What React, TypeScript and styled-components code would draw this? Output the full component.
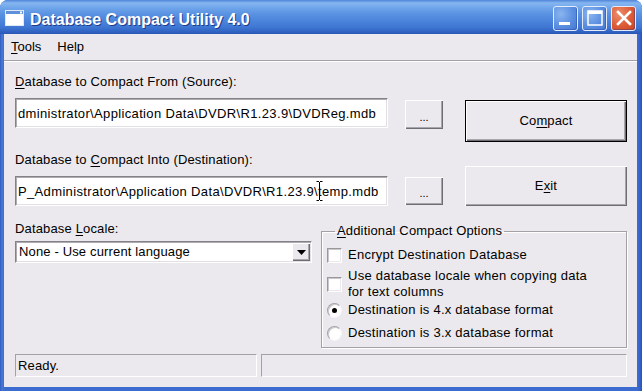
import React from 'react';
import { styled, createGlobalStyle } from 'styled-components';

const GlobalStyle = createGlobalStyle`
    html, body {
        margin: 0;
        padding: 0;
        background: #ffffff;
    }
    * {
        box-sizing: border-box;
    }
`

const UI_FONT = `"Liberation Sans", Arial, sans-serif`;

const App: React.FC = () => {
    return (
        <>
            <GlobalStyle />
            <Window>
                <TitleBar>
                    <TitleIcon width="19" height="16" viewBox="0 0 19 16">
                        <rect x="0.5" y="0.5" width="18" height="15" fill="#ffffff" stroke="#dfe8f7" />
                        <rect x="1" y="1" width="17" height="3" fill="#5f8fd8" />
                        <rect x="15" y="1.5" width="2" height="2" fill="#ffffff" />
                    </TitleIcon>
                    <TitleText>Database Compact Utility 4.0</TitleText>
                    <CaptionButtons>
                        <CaptionButton $variant="normal" aria-label="Minimize">
                            <svg width="22" height="22" viewBox="0 0 22 22">
                                <rect x="4" y="15" width="11" height="3" fill="#ffffff" />
                            </svg>
                        </CaptionButton>
                        <CaptionButton $variant="normal" aria-label="Maximize">
                            <svg width="22" height="22" viewBox="0 0 22 22">
                                <rect x="4" y="4" width="14" height="14" fill="none" stroke="#ffffff" strokeWidth="1.5" />
                                <rect x="4" y="4" width="14" height="3" fill="#ffffff" />
                            </svg>
                        </CaptionButton>
                        <CaptionButton $variant="close" aria-label="Close">
                            <svg width="22" height="22" viewBox="0 0 22 22">
                                <path d="M5 5 L17 17 M17 5 L5 17" stroke="#ffffff" strokeWidth="2.6" strokeLinecap="square" />
                            </svg>
                        </CaptionButton>
                    </CaptionButtons>
                </TitleBar>
                <Client>
                    <MenuBar>
                        <MenuItem><U>T</U>ools</MenuItem>
                        <MenuItem>Help</MenuItem>
                    </MenuBar>
                    <MenuSeparator />
                    <Body>
                        <TopSection>
                            <PathsPanel>
                                <FieldLabel><U>D</U>atabase to Compact From (Source):</FieldLabel>
                                <FieldRow>
                                    <PathInput>dministrator\Application Data\DVDR\R1.23.9\DVDReg.mdb</PathInput>
                                    <BrowseButton $top={2} $height={29}>...</BrowseButton>
                                </FieldRow>
                                <FieldLabel $gap={23}>Database to <U>C</U>ompact Into (Destination):</FieldLabel>
                                <FieldRow>
                                    <PathInput>
                                        P_Administrator\Application Data\DVDR\R1.23.9\temp.mdb
                                        <IBeam width="7" height="20" viewBox="0 0 7 20">
                                            <path d="M0.5 0.5h2.5M4 0.5h2.5M3.5 1v18M0.5 19.5h2.5M4 19.5h2.5" stroke="#000" strokeWidth="1" fill="none" />
                                        </IBeam>
                                    </PathInput>
                                    <BrowseButton $top={1} $height={28}>...</BrowseButton>
                                </FieldRow>
                            </PathsPanel>
                            <ActionsPanel>
                                <ActionButton $default $height={42}>Co<U>m</U>pact</ActionButton>
                                <ActionButton $height={40} $gap={24}>E<U>x</U>it</ActionButton>
                            </ActionsPanel>
                        </TopSection>
                        <BottomSection>
                            <LocalePanel>
                                <FieldLabel $gap={0}>Database <U>L</U>ocale:</FieldLabel>
                                <Combo>
                                    <ComboText>None - Use current language</ComboText>
                                    <ComboArrow>
                                        <svg width="9" height="5" viewBox="0 0 9 5">
                                            <path d="M0 0h9L4.5 5z" fill="#000" />
                                        </svg>
                                    </ComboArrow>
                                </Combo>
                            </LocalePanel>
                            <OptionsGroup>
                                <GroupLegend><U>A</U>dditional Compact Options</GroupLegend>
                                <Option $gap={0}>
                                    <CheckBox />
                                    <OptionText>Encrypt Destination Database</OptionText>
                                </Option>
                                <Option $gap={5}>
                                    <CheckBox />
                                    <OptionText>Use database locale when copying data<br />for text columns</OptionText>
                                </Option>
                                <Option $gap={2}>
                                    <Radio $checked />
                                    <OptionText>Destination is 4.x database format</OptionText>
                                </Option>
                                <Option $gap={7}>
                                    <Radio />
                                    <OptionText>Destination is 3.x database format</OptionText>
                                </Option>
                            </OptionsGroup>
                        </BottomSection>
                        <StatusBar>
                            <StatusPanel $width={242}>Ready.</StatusPanel>
                            <StatusPanel />
                        </StatusBar>
                    </Body>
                </Client>
            </Window>
        </>
    );
};

export default App;

const Window = styled.div`
    width: 642px;
    height: 391px;
    display: flex;
    flex-direction: column;
    background: linear-gradient(90deg, #2f5cc0 0px, #4a78d6 2px, #3d6cd0 4px, #3d6cd0 calc(100% - 4px), #2a55b8 100%);
    border-radius: 8px 8px 0 0;
    overflow: hidden;
    font-family: ${UI_FONT};
    font-size: 13px;
    letter-spacing: 0.15px;
    color: #000;
`
const TitleBar = styled.div`
    height: 34px;
    flex: none;
    display: flex;
    align-items: center;
    padding: 0 6px 0 5px;
    background: linear-gradient(180deg,
        #4f84da 0px,
        #86b6f0 3px,
        #6ea4ea 8px,
        #5a92e2 14px,
        #4d86dc 20px,
        #3f77d3 27px,
        #3366c6 31px,
        #2a56b5 34px);
`
const TitleIcon = styled.svg`
    flex: none;
    margin-top: 2px;
`
const TitleText = styled.span`
    flex: 1;
    margin-left: 6px;
    padding-top: 5px;
    font-family: "Liberation Sans", Arial, sans-serif;
    font-weight: 700;
    font-size: 16px;
    letter-spacing: 0;
    color: #ffffff;
    text-shadow: 1px 1px 0 #1c3c8e;
    white-space: nowrap;
`
const CaptionButtons = styled.div`
    display: flex;
    gap: 4px;
    margin-top: 2px;
`
const CaptionButton = styled.button<{ $variant: 'normal' | 'close' }>`
    width: 25px;
    height: 25px;
    padding: 0;
    border: 1px solid #e4ecfa;
    border-radius: 3px;
    display: flex;
    align-items: center;
    justify-content: center;
    background: ${({ $variant }) => $variant === 'close'
        ? 'radial-gradient(circle at 30% 30%, #ec8e6e 0%, #dc5b36 55%, #c8441e 100%)'
        : 'radial-gradient(circle at 30% 30%, #8ab5ef 0%, #5a8ee0 55%, #4677d2 100%)'};
    box-shadow: inset -1px -1px 0 rgba(20, 50, 140, 0.35);
`
const Client = styled.div`
    flex: 1;
    display: flex;
    flex-direction: column;
    margin: 0 5px 4px 4px;
    background: #ebe9ed;
`
const MenuBar = styled.div`
    height: 26px;
    display: flex;
    align-items: center;
    gap: 16px;
    padding-left: 7px;
    letter-spacing: 0;
`
const MenuItem = styled.span`
    line-height: 16px;
`
const MenuSeparator = styled.div`
    height: 2px;
    border-top: 1px solid #a3a1a6;
    border-bottom: 1px solid #ffffff;
`
const U = styled.span`
    text-decoration: underline;
    text-underline-offset: 2px;
`
const Body = styled.div`
    flex: 1;
    display: flex;
    flex-direction: column;
    padding: 12px 10px 10px 11px;
`
const TopSection = styled.div`
    display: flex;
    align-items: flex-start;
`
const PathsPanel = styled.div`
    width: 428px;
    display: flex;
    flex-direction: column;
`
const FieldLabel = styled.div<{ $gap?: number }>`
    line-height: 16px;
    margin-top: ${({ $gap }) => $gap ?? 0}px;
    white-space: nowrap;
`
const FieldRow = styled.div`
    display: flex;
    align-items: flex-start;
    gap: 17px;
    margin-top: 8px;
`
const PathInput = styled.div`
    position: relative;
    width: 373px;
    height: 30px;
    display: flex;
    align-items: center;
    padding-left: 2px;
    background: #ffffff;
    border: 1px solid;
    border-color: #848287 #ffffff #ffffff #848287;
    box-shadow: inset 1px 1px 0 #aeacb1, inset -1px -1px 0 #e2e0e5;
    letter-spacing: 0.35px;
    white-space: nowrap;
    overflow: hidden;
`
const IBeam = styled.svg`
    position: absolute;
    left: 300px;
    top: 4px;
`
const raised = `
    background: #ebe9ed;
    box-shadow: inset 1px 1px 0 #ffffff, inset -1px -1px 0 #6f6d74, inset -2px -2px 0 #a8a6ab;
`
const BrowseButton = styled.button<{ $top: number; $height: number }>`
    width: 38px;
    height: ${({ $height }) => $height}px;
    margin-top: ${({ $top }) => $top}px;
    padding: 4px 0 0;
    border: none;
    ${raised}
    font-family: ${UI_FONT};
    font-size: 11px;
    color: #000;
`
const ActionsPanel = styled.div`
    width: 162px;
    margin-left: 22px;
    padding-top: 26px;
    display: flex;
    flex-direction: column;
`
const ActionButton = styled.button<{ $default?: boolean; $height: number; $gap?: number }>`
    width: 162px;
    height: ${({ $height }) => $height}px;
    margin-top: ${({ $gap }) => $gap ?? 0}px;
    padding: 0 0 2px;
    border: ${({ $default }) => ($default ? '1px solid #000000' : 'none')};
    ${raised}
    font-family: ${UI_FONT};
    font-size: 13px;
    letter-spacing: 0.15px;
    color: #000;
`
const BottomSection = styled.div`
    display: flex;
    align-items: flex-start;
    gap: 9px;
    margin-top: 15px;
`
const LocalePanel = styled.div`
    width: 297px;
    display: flex;
    flex-direction: column;
    gap: 4px;
`
const Combo = styled.div`
    height: 22px;
    display: flex;
    align-items: center;
    justify-content: space-between;
    padding: 1px;
    background: #ffffff;
    border: 1px solid;
    border-color: #848287 #ffffff #ffffff #848287;
    box-shadow: inset 1px 1px 0 #aeacb1, inset -1px -1px 0 #e2e0e5;
`
const ComboText = styled.span`
    padding-left: 2px;
    line-height: 16px;
`
const ComboArrow = styled.span`
    width: 18px;
    height: 18px;
    display: flex;
    align-items: center;
    justify-content: center;
    ${raised}
`
const OptionsGroup = styled.fieldset`
    width: 306px;
    margin: 2px 0 0;
    padding: 8px 0 6px 5px;
    min-width: 0;
    border: 1px solid #a3a1a6;
    box-shadow: inset 1px 1px 0 #ffffff, 1px 1px 0 #ffffff;
    display: flex;
    flex-direction: column;
`
const GroupLegend = styled.legend`
    margin-left: 8px;
    padding: 0 2px;
    line-height: 16px;
`
const Option = styled.div<{ $gap: number }>`
    display: flex;
    align-items: center;
    gap: 6px;
    margin-top: ${({ $gap }) => $gap}px;
`
const OptionText = styled.span`
    line-height: 16px;
    letter-spacing: 0.25px;
    white-space: nowrap;
`
const CheckBox = styled.span`
    flex: none;
    width: 15px;
    height: 15px;
    background: #ffffff;
    border: 1px solid;
    border-color: #9a989d #ffffff #ffffff #9a989d;
    box-shadow: inset 1px 1px 0 #c9c7cc, inset -1px -1px 0 #ebe9ed;
`
const Radio = styled.span<{ $checked?: boolean }>`
    flex: none;
    position: relative;
    width: 15px;
    height: 15px;
    border-radius: 50%;
    background: #ffffff;
    border: 1px solid;
    border-color: #a3a1a6 #f4f3f6 #f4f3f6 #a3a1a6;
    box-shadow: inset 1px 1px 0 #cfcdd2;

    &::after {
        content: '';
        display: ${({ $checked }) => ($checked ? 'block' : 'none')};
        position: absolute;
        left: 4px;
        top: 4px;
        width: 5px;
        height: 5px;
        border-radius: 50%;
        background: #000000;
    }
`
const StatusBar = styled.div`
    display: flex;
    gap: 4px;
    margin-top: 6px;
    height: 23px;
`
const StatusPanel = styled.div<{ $width?: number }>`
    ${({ $width }) => ($width ? `width: ${$width}px; flex: none;` : 'flex: 1;')}
    display: flex;
    align-items: center;
    padding-left: 2px;
    border: 1px solid;
    border-color: #a3a1a6 #ffffff #ffffff #a3a1a6;
    line-height: 16px;
`
